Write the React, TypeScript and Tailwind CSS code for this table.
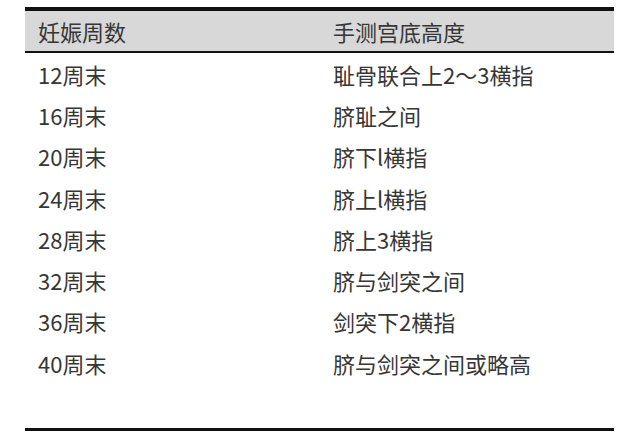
const rows: [string, string][] = [
  ["12周末", "耻骨联合上2～3横指"],
  ["16周末", "脐耻之间"],
  ["20周末", "脐下l横指"],
  ["24周末", "脐上l横指"],
  ["28周末", "脐上3横指"],
  ["32周末", "脐与剑突之间"],
  ["36周末", "剑突下2横指"],
  ["40周末", "脐与剑突之间或略高"],
];

const App = () => {
  return (
    <div
      className="w-[640px] h-[442px] bg-white pt-[7px] pl-[25px] text-[#363636] text-[22px] leading-none"
      style={{ fontFamily: '"Noto Sans CJK SC", "Noto Sans", sans-serif' }}
    >
      <div className="w-[589px]">
        {/* Header */}
        <div className="grid grid-cols-[308px_1fr] h-[46px] border-t-4 border-b-2 border-[#111111] bg-[#d8d8d8] items-center">
          <div className="pl-[13px]">妊娠周数</div>
          <div>手测宫底高度</div>
        </div>

        {/* Body */}
        <div className="pb-[45px] border-b-[3px] border-[#111111]">
          {rows.map(([week, height]) => (
            <div key={week} className="grid grid-cols-[308px_1fr] h-[41.3px] items-center">
              <div className="pl-[13px]">{week}</div>
              <div>{height}</div>
            </div>
          ))}
        </div>
      </div>
    </div>
  );
};

export default App;
